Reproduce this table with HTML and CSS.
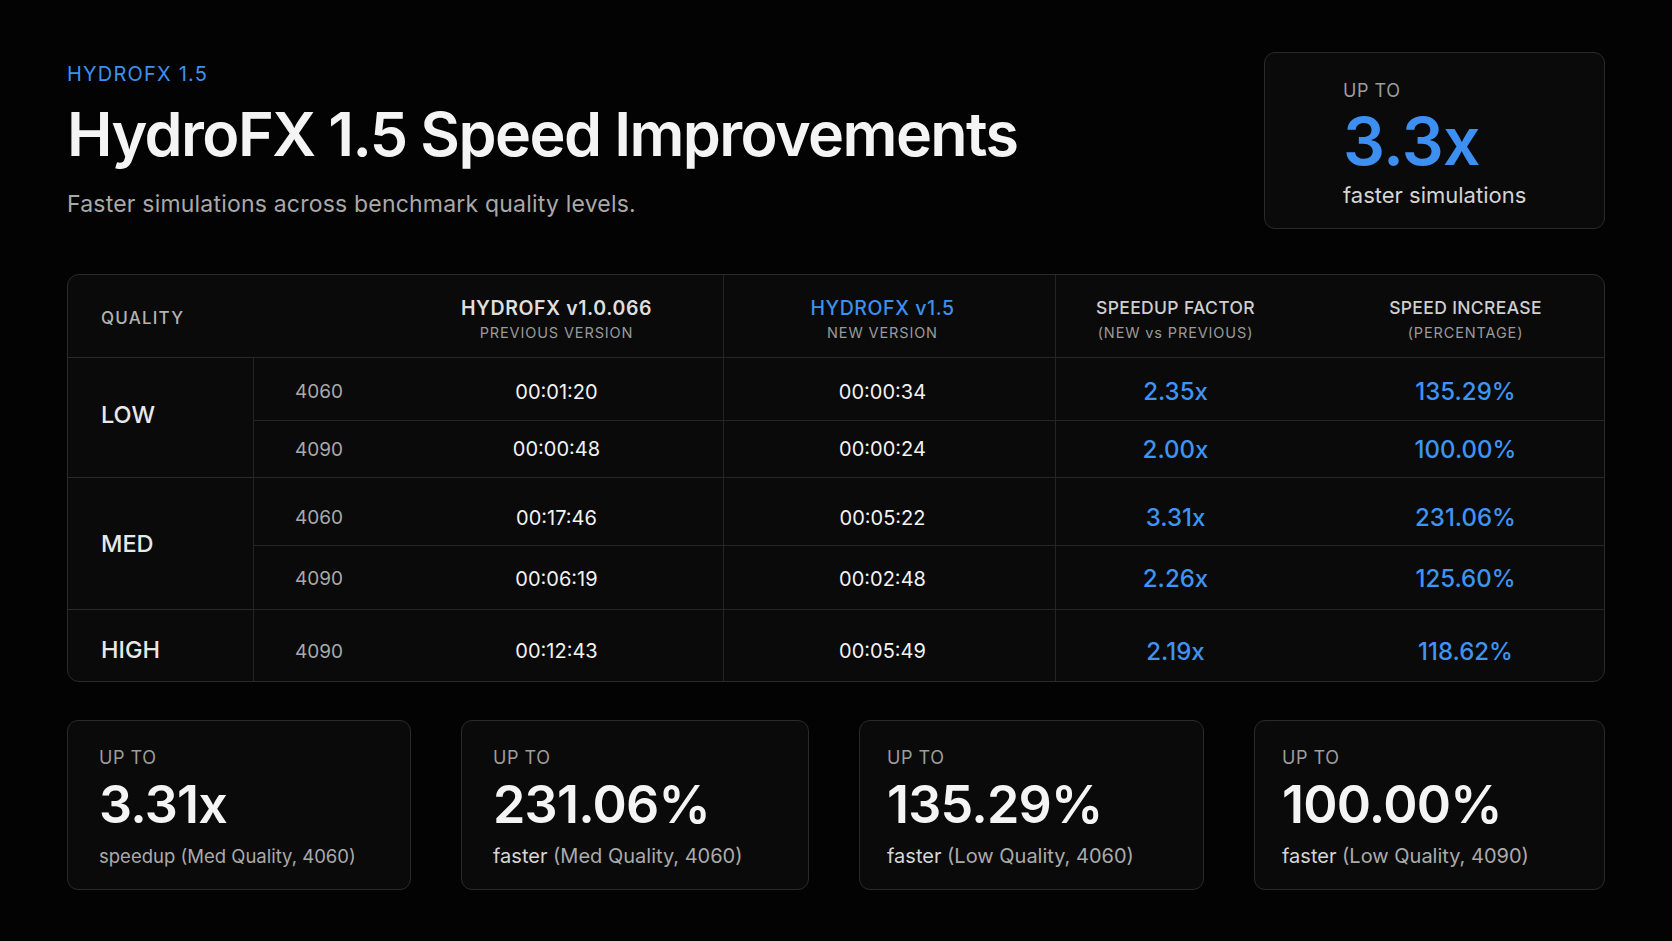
FILE: index.html
```html
<!DOCTYPE html>
<html lang="en">
<head>
<meta charset="utf-8">
<title>HydroFX 1.5 Speed Improvements</title>
<link rel="stylesheet" href="styles.css">
</head>
<body>
<main class="page">
  <section class="top">
    <div class="intro">
      <div class="eyebrow">HYDROFX 1.5</div>
      <h1 class="title">HydroFX 1.5 Speed Improvements</h1>
      <p class="subtitle">Faster simulations across benchmark quality levels.</p>
    </div>
    <div class="hero-card">
      <div class="upto">UP TO</div>
      <div class="hero-value">3.3x</div>
      <div class="hero-caption">faster simulations</div>
    </div>
  </section>

  <section class="table">
    <div class="th th-quality">QUALITY</div>
    <div class="th"></div>
    <div class="th th-center"><div class="th-title">HYDROFX v1.0.066</div><div class="th-sub">PREVIOUS VERSION</div></div>
    <div class="th th-center vline col-new"><div class="th-title blue">HYDROFX v1.5</div><div class="th-sub">NEW VERSION</div></div>
    <div class="th th-center vline col-speed"><div class="th-title light">SPEEDUP FACTOR</div><div class="th-sub">(NEW vs PREVIOUS)</div></div>
    <div class="th th-center col-inc"><div class="th-title light">SPEED INCREASE</div><div class="th-sub">(PERCENTAGE)</div></div>

    <div class="q q-low">LOW</div>
    <div class="q q-med">MED</div>
    <div class="q q-high">HIGH</div>

    <div class="row row-1">
      <div class="td gpu">4060</div>
      <div class="td time">00:01:20</div>
      <div class="td time vline col-new">00:00:34</div>
      <div class="td val vline col-speed">2.35x</div>
      <div class="td val col-inc">135.29%</div>
    </div>

    <div class="row row-2">
      <div class="td gpu">4090</div>
      <div class="td time">00:00:48</div>
      <div class="td time vline col-new">00:00:24</div>
      <div class="td val vline col-speed">2.00x</div>
      <div class="td val col-inc">100.00%</div>
    </div>

    <div class="row row-3">
      <div class="td gpu">4060</div>
      <div class="td time">00:17:46</div>
      <div class="td time vline col-new">00:05:22</div>
      <div class="td val vline col-speed">3.31x</div>
      <div class="td val col-inc">231.06%</div>
    </div>

    <div class="row row-4">
      <div class="td gpu">4090</div>
      <div class="td time">00:06:19</div>
      <div class="td time vline col-new">00:02:48</div>
      <div class="td val vline col-speed">2.26x</div>
      <div class="td val col-inc">125.60%</div>
    </div>

    <div class="row row-5">
      <div class="td gpu">4090</div>
      <div class="td time">00:12:43</div>
      <div class="td time vline col-new">00:05:49</div>
      <div class="td val vline col-speed">2.19x</div>
      <div class="td val col-inc">118.62%</div>
    </div>
  </section>

  <section class="cards">
    <div class="card">
      <div class="upto">UP TO</div>
      <div class="card-value">3.31x</div>
      <div class="card-caption small">speedup (Med Quality, 4060)</div>
    </div>
    <div class="card">
      <div class="upto">UP TO</div>
      <div class="card-value">231.06%</div>
      <div class="card-caption"><span class="hl">faster</span> (Med Quality, 4060)</div>
    </div>
    <div class="card card-tight">
      <div class="upto">UP TO</div>
      <div class="card-value">135.29%</div>
      <div class="card-caption"><span class="hl">faster</span> (Low Quality, 4060)</div>
    </div>
    <div class="card card-tight">
      <div class="upto">UP TO</div>
      <div class="card-value">100.00%</div>
      <div class="card-caption"><span class="hl">faster</span> (Low Quality, 4090)</div>
    </div>
  </section>
</main>
</body>
</html>
```

FILE: styles.css
```css
* { box-sizing: border-box; }

html, body {
  margin: 0;
  padding: 0;
  background: #030303;
}

body {
  font-family: Inter, "Noto Sans", "Liberation Sans", sans-serif;
  color: #ececec;
  width: 1672px;
  height: 941px;
  overflow: hidden;
}

.page {
  padding: 52px 67px 0 67px;
}

/* ---------- top ---------- */
.top {
  display: flex;
  justify-content: space-between;
  align-items: flex-start;
  height: 177px;
}

.intro {
  padding-top: 10px;
}

.eyebrow {
  font-size: 20px;
  line-height: 24px;
  letter-spacing: 0.06em;
  color: #3b91f0;
}

.title {
  margin: 12px 0 0 0;
  font-size: 61px;
  line-height: 72px;
  font-weight: 600;
  letter-spacing: -0.026em;
  color: #f4f4f4;
}

.subtitle {
  margin: 20px 0 0 0;
  font-size: 23px;
  line-height: 28px;
  letter-spacing: 0.2px;
  color: #a9a9a9;
}

.hero-card {
  width: 341px;
  height: 177px;
  border: 1px solid #2a2a2a;
  border-radius: 11px;
  background: #0a0a0a;
  padding: 27px 0 0 78px;
}

.upto {
  font-size: 18px;
  line-height: 22px;
  letter-spacing: 0.03em;
  color: #9d9d9d;
}

.hero-value {
  margin-top: 4px;
  font-size: 66px;
  line-height: 70px;
  font-weight: 600;
  letter-spacing: -0.01em;
  color: #3d8ff2;
}

.hero-caption {
  margin-top: 6px;
  font-size: 22px;
  line-height: 26px;
  color: #d4d4d4;
}

/* ---------- table ---------- */
.table {
  margin-top: 45px;
  display: grid;
  grid-template-columns: 186px 136px 333px 332px 244px 305px;
  grid-template-rows: 82px 63px 57px 68px 64px 72px;
  border: 1px solid #2b2b2b;
  border-radius: 12px;
  background: #0a0a0a;
  overflow: hidden;
}

.th {
  grid-row: 1;
  display: flex;
  flex-direction: column;
  justify-content: center;
  padding-top: 6px;
}

.th-quality {
  grid-column: 1;
  padding-left: 33px;
  font-size: 17px;
  letter-spacing: 0.07em;
  font-weight: 500;
  color: #b3b3b3;
  padding-top: 4px;
}

.th-center {
  align-items: center;
  text-align: center;
}

.th-title {
  font-size: 19.5px;
  line-height: 22px;
  font-weight: 600;
  letter-spacing: 0.03em;
  color: #dedede;
}

.th-title.light {
  font-size: 17.5px;
  font-weight: 500;
  letter-spacing: 0.02em;
  color: #cfcfcf;
}

.th-title.blue {
  color: #3b91f0;
  font-weight: 500;
}

.th-sub {
  margin-top: 5px;
  font-size: 14.5px;
  line-height: 18px;
  letter-spacing: 0.06em;
  color: #9a9a9a;
}

.vline {
  border-left: 1px solid #242424;
}

.col-new {
  padding-right: 14px;
}

.col-speed {
  padding-right: 4px;
}

.col-inc {
  padding-left: 28px;
}

.q {
  grid-column: 1;
  display: flex;
  align-items: center;
  padding-left: 33px;
  font-size: 23.5px;
  font-weight: 500;
  color: #e8e8e8;
  border-top: 1px solid #2a2a2a;
  border-right: 1px solid #242424;
}

.q-low { grid-row: 2 / 4; padding-bottom: 6px; }
.q-med { grid-row: 4 / 6; }
.q-high { grid-row: 6 / 7; padding-top: 7px; }

.row { display: contents; }

.td {
  display: flex;
  align-items: center;
  justify-content: center;
  border-top: 1px solid #262626;
}

.row-1 .td { grid-row: 2; padding-top: 5px; }
.row-2 .td { grid-row: 3; padding-top: 0; }
.row-3 .td { grid-row: 4; padding-top: 12px; }
.row-4 .td { grid-row: 5; padding-top: 2px; }
.row-5 .td { grid-row: 6; padding-top: 11px; }

.td.gpu {
  grid-column: 2;
  justify-content: flex-start;
  padding-left: 41px;
  font-size: 19px;
  color: #a9a9a9;
}

.td.time {
  font-size: 20px;
  color: #f2f2f2;
}

.td.val {
  font-size: 24px;
  font-weight: 500;
  color: #3e94f2;
}

/* ---------- cards ---------- */
.cards {
  margin-top: 38px;
  display: grid;
  grid-template-columns: 344fr 348fr 345fr 351fr;
  gap: 50px;
}

.card {
  height: 170px;
  border: 1px solid #2a2a2a;
  border-radius: 11px;
  background: #0a0a0a;
  padding: 26px 0 0 31px;
}

.card-tight {
  padding-left: 27px;
}

.card-value {
  margin-top: 6px;
  font-size: 52px;
  line-height: 60px;
  font-weight: 600;
  letter-spacing: -0.015em;
  color: #f4f4f4;
}

.card-caption {
  margin-top: 9px;
  font-size: 20px;
  line-height: 24px;
  color: #aaaaaa;
}

.card-caption.small {
  font-size: 18.5px;
}

.card-caption .hl {
  color: #d6d6d6;
}
```
